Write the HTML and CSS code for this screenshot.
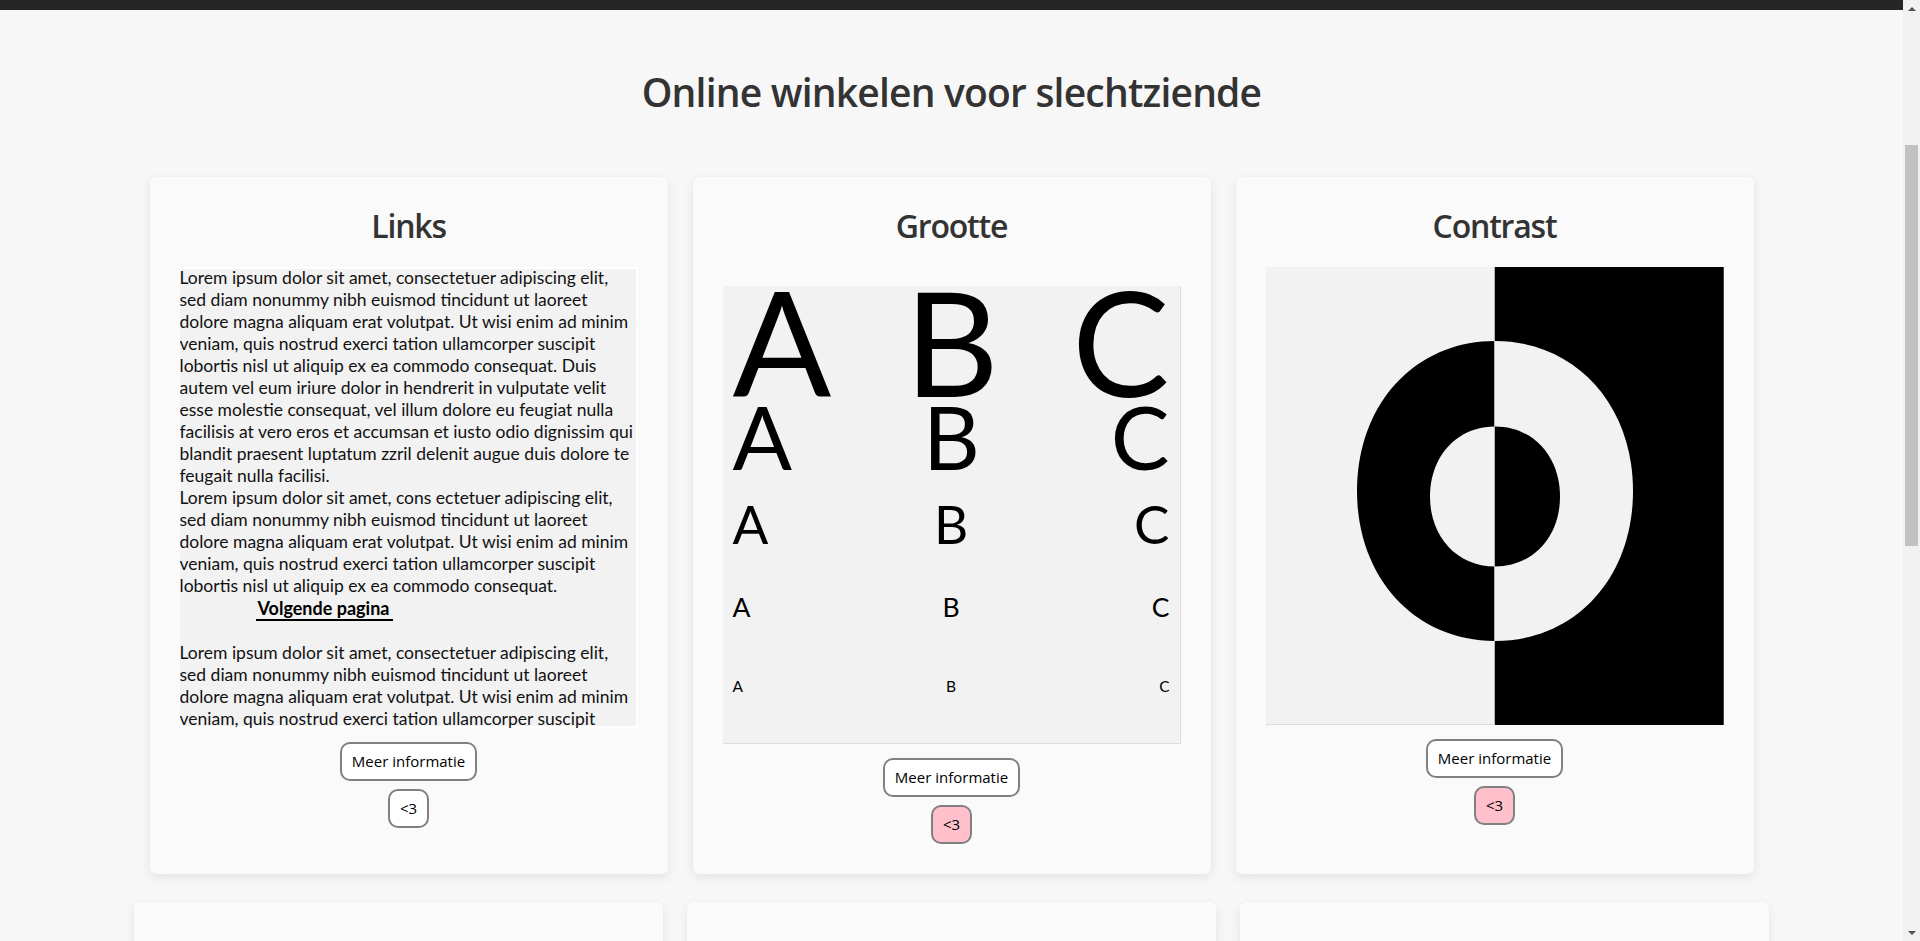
FILE: index.html
```html
<!DOCTYPE html>
<html lang="nl">
<head>
<meta charset="utf-8">
<title>Online winkelen voor slechtziende</title>
<link rel="stylesheet" href="styles.css">
</head>
<body>
<header class="site-header" role="banner"></header>
<main class="page">
  <h1 class="page-title">Online winkelen voor slechtziende</h1>

  <section class="cards cards-top">
    <article class="card">
      <h2 class="card-title">Links</h2>
      <div class="reader">
        <p>Lorem ipsum dolor sit amet, consectetuer adipiscing elit,<br>sed diam nonummy nibh euismod tincidunt ut laoreet<br>dolore magna aliquam erat volutpat. Ut wisi enim ad minim<br>veniam, quis nostrud exerci tation ullamcorper suscipit<br>lobortis nisl ut aliquip ex ea commodo consequat. Duis<br>autem vel eum iriure dolor in hendrerit in vulputate velit<br>esse molestie consequat, vel illum dolore eu feugiat nulla<br>facilisis at vero eros et accumsan et iusto odio dignissim qui<br>blandit praesent luptatum zzril delenit augue duis dolore te<br>feugait nulla facilisi.</p>
        <p>Lorem ipsum dolor sit amet, cons ectetuer adipiscing elit,<br>sed diam nonummy nibh euismod tincidunt ut laoreet<br>dolore magna aliquam erat volutpat. Ut wisi enim ad minim<br>veniam, quis nostrud exerci tation ullamcorper suscipit<br>lobortis nisl ut aliquip ex ea commodo consequat.<br><a class="next-link" href="#">Volgende pagina</a></p>
        <p class="reader-gap">Lorem ipsum dolor sit amet, consectetuer adipiscing elit,<br>sed diam nonummy nibh euismod tincidunt ut laoreet<br>dolore magna aliquam erat volutpat. Ut wisi enim ad minim<br>veniam, quis nostrud exerci tation ullamcorper suscipit<br>lobortis nisl ut aliquip ex ea commodo consequat.</p>
      </div>
      <div class="actions">
        <button class="btn" type="button">Meer informatie</button>
        <button class="btn" type="button">&lt;3</button>
      </div>
    </article>

    <article class="card">
      <h2 class="card-title">Grootte</h2>
      <div class="sizes">
        <div class="size-row size-1"><span>A</span><span>B</span><span>C</span></div>
        <div class="size-row size-2"><span>A</span><span>B</span><span>C</span></div>
        <div class="size-row size-3"><span>A</span><span>B</span><span>C</span></div>
        <div class="size-row size-4"><span>A</span><span>B</span><span>C</span></div>
        <div class="size-row size-5"><span>A</span><span>B</span><span>C</span></div>
      </div>
      <div class="actions">
        <button class="btn" type="button">Meer informatie</button>
        <button class="btn btn-liked" type="button">&lt;3</button>
      </div>
    </article>

    <article class="card">
      <h2 class="card-title">Contrast</h2>
      <svg class="contrast" viewBox="0 0 458 458" width="458" height="458" role="img" aria-label="Contrastvoorbeeld">
        <defs>
          <clipPath id="half-left"><rect x="0" y="0" width="229" height="458"/></clipPath>
          <clipPath id="half-right"><rect x="229" y="0" width="229" height="458"/></clipPath>
        </defs>
        <rect x="0" y="0" width="229" height="458" fill="#f2f2f2"/>
        <rect x="229" y="0" width="229" height="458" fill="#000"/>
        <g clip-path="url(#half-left)">
          <path fill="#000" d="M229,74 C309,74 367,137 367,224 C367,311 309,374 229,374 C149,374 91,311 91,224 C91,137 149,74 229,74 Z"/>
          <path fill="#f2f2f2" d="M229,159.5 C266.7,159.5 294,188.9 294,229.5 C294,270.1 266.7,299.5 229,299.5 C191.3,299.5 164,270.1 164,229.5 C164,188.9 191.3,159.5 229,159.5 Z"/>
        </g>
        <g clip-path="url(#half-right)">
          <path fill="#f2f2f2" d="M229,74 C309,74 367,137 367,224 C367,311 309,374 229,374 C149,374 91,311 91,224 C91,137 149,74 229,74 Z"/>
          <path fill="#000" d="M229,159.5 C266.7,159.5 294,188.9 294,229.5 C294,270.1 266.7,299.5 229,299.5 C191.3,299.5 164,270.1 164,229.5 C164,188.9 191.3,159.5 229,159.5 Z"/>
        </g>
        <line x1="228.5" y1="0" x2="228.5" y2="458" stroke="#b5b5b5" stroke-width="1"/>
        <line x1="0" y1="457.5" x2="229" y2="457.5" stroke="#dcdcdc" stroke-width="1"/>
        <line x1="457.5" y1="0" x2="457.5" y2="458" stroke="#444" stroke-width="1"/>
      </svg>
      <div class="actions">
        <button class="btn" type="button">Meer informatie</button>
        <button class="btn btn-liked" type="button">&lt;3</button>
      </div>
    </article>
  </section>

  <section class="cards cards-bottom">
    <article class="card">
      <h2 class="card-title">Zoomen</h2>
      <div class="reader">
        <p>Lorem ipsum dolor sit amet, consectetuer adipiscing elit,<br>sed diam nonummy nibh euismod tincidunt ut laoreet<br>dolore magna aliquam erat volutpat. Ut wisi enim ad minim<br>veniam, quis nostrud exerci tation ullamcorper suscipit.</p>
      </div>
      <div class="actions">
        <button class="btn" type="button">Meer informatie</button>
        <button class="btn" type="button">&lt;3</button>
      </div>
    </article>
    <article class="card">
      <h2 class="card-title">Menu</h2>
      <div class="reader">
        <p>Lorem ipsum dolor sit amet, consectetuer adipiscing elit,<br>sed diam nonummy nibh euismod tincidunt ut laoreet<br>dolore magna aliquam erat volutpat. Ut wisi enim ad minim<br>veniam, quis nostrud exerci tation ullamcorper suscipit.</p>
      </div>
      <div class="actions">
        <button class="btn" type="button">Meer informatie</button>
        <button class="btn" type="button">&lt;3</button>
      </div>
    </article>
    <article class="card">
      <h2 class="card-title">Toetsenbord</h2>
      <div class="reader">
        <p>Lorem ipsum dolor sit amet, consectetuer adipiscing elit,<br>sed diam nonummy nibh euismod tincidunt ut laoreet<br>dolore magna aliquam erat volutpat. Ut wisi enim ad minim<br>veniam, quis nostrud exerci tation ullamcorper suscipit.</p>
      </div>
      <div class="actions">
        <button class="btn" type="button">Meer informatie</button>
        <button class="btn" type="button">&lt;3</button>
      </div>
    </article>
  </section>
</main>

<div class="scrollbar" aria-hidden="true">
  <span class="sb-button"><span class="sb-arrow sb-arrow-up"></span></span>
  <span class="sb-track"><span class="sb-thumb"></span></span>
  <span class="sb-button"><span class="sb-arrow sb-arrow-down"></span></span>
</div>

<script src="script.js"></script>
</body>
</html>
```

FILE: styles.css
```css
* {
  box-sizing: border-box;
}

html {
  scrollbar-width: none;
}

html::-webkit-scrollbar {
  display: none;
}

body {
  margin: 0;
  padding-right: 17px;
  background: #f7f7f7;
  font-family: "Open Sans", "Noto Sans", sans-serif;
  color: #333;
}

.site-header {
  height: 310px;
  margin-right: -17px;
  background: #262626;
}

.page {
  padding: 58px 0 242px;
}

.page-title {
  margin: 0 0 61px;
  text-align: center;
  font-size: 39px;
  line-height: 48px;
  font-weight: 600;
  letter-spacing: -0.8px;
  color: #333;
}

.cards {
  display: grid;
  grid-template-columns: repeat(3, 1fr);
  margin: 0 auto;
}

.cards-top {
  width: 1604px;
  column-gap: 25px;
}

.cards-bottom {
  width: 1635px;
  column-gap: 24px;
  margin-top: 28px;
}

.card {
  display: flex;
  flex-direction: column;
  align-items: center;
  padding: 29px 30px 30px;
  background: #fafafa;
  border-radius: 6px;
  box-shadow: 0 4px 12px rgba(0, 0, 0, 0.08), 0 0 2px rgba(0, 0, 0, 0.04);
}

.cards-bottom .card {
  padding-top: 36px;
}

.card-title {
  margin: 0;
  font-size: 32px;
  line-height: 40px;
  font-weight: 600;
  letter-spacing: -1.2px;
  color: #333;
}

.reader {
  align-self: stretch;
  margin-top: 21px;
  height: 461px;
  background: #f2f2f2;
  box-shadow: inset 0 2px 0 #fff, inset -2px 0 0 #fff, inset 0 -2px 0 #fff;
  overflow-y: auto;
  scrollbar-width: none;
  font-family: Lato, "Liberation Sans", sans-serif;
  font-size: 17.5px;
  line-height: 22px;
  color: #111;
  white-space: nowrap;
}

.reader p {
  margin: 0;
}

.reader .reader-gap {
  margin-top: 22px;
}

.next-link {
  margin-left: 76px;
  padding: 0 4px 0 2px;
  color: #000;
  font-size: 18px;
  font-weight: 700;
  text-decoration: none;
  border-bottom: 2px solid #000;
}

.sizes {
  align-self: stretch;
  margin-top: 40px;
  height: 458px;
  padding: 0 10px;
  background: #f2f2f2;
  border-right: 1px solid #dcdcdc;
  border-bottom: 1px solid #dcdcdc;
  font-family: Lato, "Liberation Sans", sans-serif;
  color: #000;
}

.size-row {
  display: flex;
  justify-content: space-between;
}

.size-1 {
  font-size: 146px;
  line-height: 109px;
}

.size-2 {
  font-size: 88px;
  line-height: 82px;
}

.size-3 {
  font-size: 53px;
  line-height: 93px;
}

.size-4 {
  font-size: 26.5px;
  line-height: 75px;
}

.size-5 {
  font-size: 15.5px;
  line-height: 82px;
}

.contrast {
  display: block;
  margin-top: 21px;
  width: 458px;
  height: 458px;
}

.actions {
  display: flex;
  flex-direction: column;
  align-items: center;
  gap: 8px;
  margin-top: 14px;
}

.btn {
  font-family: "Open Sans", "Noto Sans", sans-serif;
  font-size: 15px;
  line-height: 21px;
  padding: 7px 10px;
  border: 2px solid #808080;
  border-radius: 10px;
  background: #fff;
  color: #000;
  cursor: pointer;
}

.btn-liked {
  background: #ffc0cb;
}

/* Drawn window scrollbar, overlaying the right edge of the viewport */
.scrollbar {
  position: fixed;
  top: 0;
  right: 0;
  width: 17px;
  height: 100vh;
  display: flex;
  flex-direction: column;
  background: #f1f1f1;
}

.sb-button {
  flex: none;
  height: 17px;
  display: flex;
  align-items: center;
  justify-content: center;
}

.sb-arrow {
  width: 0;
  height: 0;
  border-left: 4px solid transparent;
  border-right: 4px solid transparent;
}

.sb-arrow-up {
  border-bottom: 4px solid #505050;
}

.sb-arrow-down {
  border-top: 4px solid #505050;
}

.sb-track {
  flex: 1;
  padding: 128px 2px 0;
}

.sb-thumb {
  display: block;
  height: 401px;
  background: #c1c1c1;
}
```

FILE: script.js
```js
if ('scrollRestoration' in history) {
  history.scrollRestoration = 'manual';
}
window.scrollTo(0, 300);
window.addEventListener('load', function () {
  window.scrollTo(0, 300);
});
```
